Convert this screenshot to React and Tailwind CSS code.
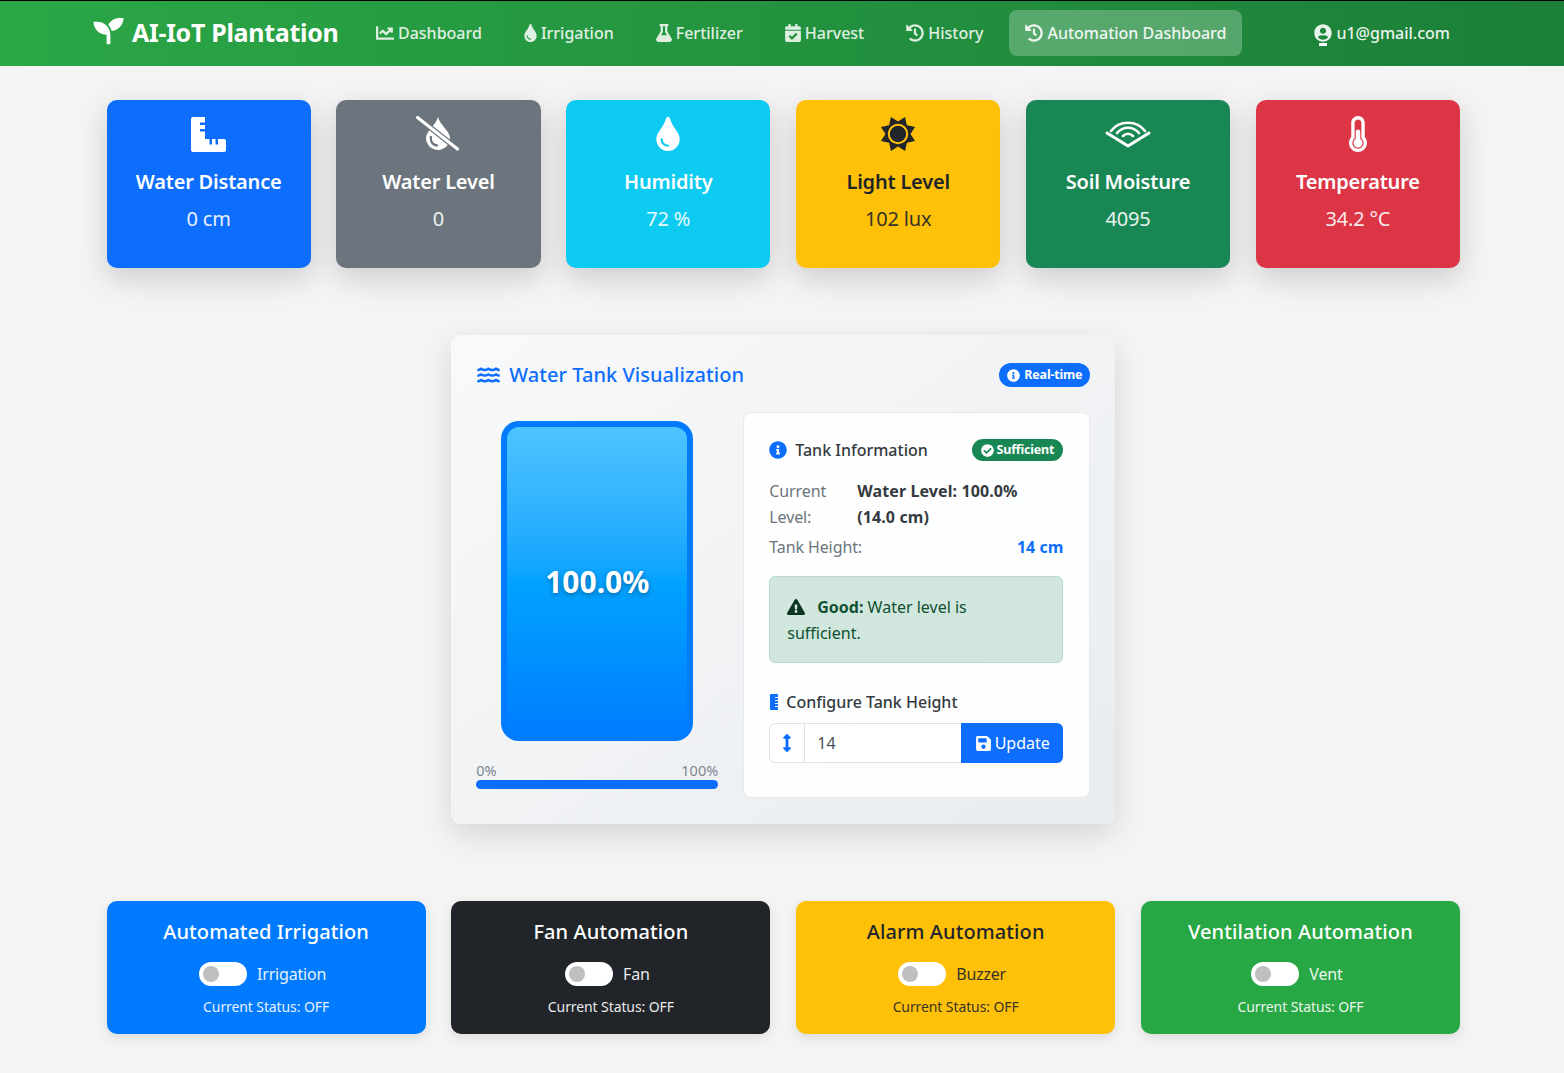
import React from 'react';
import {
  FaSeedling, FaChartLine, FaTint, FaFlask, FaCalendarCheck, FaHistory, FaUserCircle,
  FaThermometerHalf, FaWater, FaInfoCircle,
  FaCheckCircle, FaExclamationTriangle, FaRulerVertical, FaArrowsAltV, FaSave,
} from 'react-icons/fa';

const NAV = [
  { label: 'Dashboard', Icon: FaChartLine, w: 'w-[18px]' },
  { label: 'Irrigation', Icon: FaTint, w: 'w-[13px]' },
  { label: 'Fertilizer', Icon: FaFlask, w: 'w-[16px]' },
  { label: 'Harvest', Icon: FaCalendarCheck, w: 'w-[16px]' },
  { label: 'History', Icon: FaHistory, w: 'w-[18px]' },
  { label: 'Automation Dashboard', Icon: FaHistory, w: 'w-[18px]', active: true },
];

function RulerIcon({ className }) {
  return (
    <svg viewBox="0 0 35 35" className={className} fill="currentColor">
      <path d="M2 0 H14 V5.5 H9 V8 H14 V12 H9 V14.5 H14 V22 H18.5 V27.5 H21 V22 H24.5 V27.5 H27 V22 H33 a2 2 0 0 1 2 2 V33 a2 2 0 0 1 -2 2 H2 a2 2 0 0 1 -2 -2 V2 a2 2 0 0 1 2 -2 Z" />
    </svg>
  );
}

function DropSlashIcon({ className }) {
  return (
    <svg viewBox="0 0 44 36" className={className} fill="none">
      <path d="M22 1 C24 9 34 15 34 22 C34 29 28 34 22 34 C16 34 10 29 10 22 C10 15 20 9 22 1 Z" fill="currentColor" />
      <path d="M15 20 C14 26 17 29.5 22 29.5" stroke="#6c757d" strokeWidth="2.2" />
      <path d="M1.5 1.5 L41.5 33" stroke="#6c757d" strokeWidth="5.5" />
      <path d="M1.5 1.5 L41.5 33" stroke="currentColor" strokeWidth="3" strokeLinecap="round" />
    </svg>
  );
}

// eight blunt spikes, turned so that none points straight up
const SUN_POINTS = Array.from({ length: 16 }, (_, i) => {
  const r = i % 2 === 0 ? 18.5 : 12.5;
  const a = ((22.5 * i - 67.5) * Math.PI) / 180;
  return `${(18 + r * Math.cos(a)).toFixed(2)},${(18 + r * Math.sin(a)).toFixed(2)}`;
}).join(' ');

function SunIcon({ className }) {
  return (
    <svg viewBox="0 0 36 36" className={className}>
      <polygon points={SUN_POINTS} fill="currentColor" strokeLinejoin="round" />
      <circle cx="18" cy="18" r="9.2" fill="none" stroke="#ffc107" strokeWidth="2" />
    </svg>
  );
}

function SoilIcon({ className }) {
  return (
    <svg viewBox="0 0 46 28" className={className} fill="none" stroke="currentColor" strokeLinecap="round">
      <path d="M2 13 L23 26 L44 13" strokeWidth="3" strokeLinejoin="round" />
      <path d="M6 11 C14 0 32 0 40 11" strokeWidth="2.6" />
      <path d="M12 13 C18 6 28 6 34 13" strokeWidth="2.6" />
      <path d="M18 16 C21 13 25 13 28 16" strokeWidth="2.6" />
    </svg>
  );
}

const SENSORS = [
  { title: 'Water Distance', value: '0 cm', Icon: RulerIcon, bg: 'bg-[#0d6efd]', text: 'text-white', icon: 'w-[35px] h-[35px]' },
  { title: 'Water Level', value: '0', Icon: DropSlashIcon, bg: 'bg-[#6c757d]', text: 'text-white', icon: 'w-[44px] h-[36px]' },
  { title: 'Humidity', value: '72 %', Icon: FaTint, bg: 'bg-[#0dcaf0]', text: 'text-white', icon: 'w-[36px] h-[34px]' },
  { title: 'Light Level', value: '102 lux', Icon: SunIcon, bg: 'bg-[#ffc107]', text: 'text-[#212529]', icon: 'w-[36px] h-[36px]' },
  { title: 'Soil Moisture', value: '4095', Icon: SoilIcon, bg: 'bg-[#198754]', text: 'text-white', icon: 'w-[46px] h-[28px]' },
  { title: 'Temperature', value: '34.2 °C', Icon: FaThermometerHalf, bg: 'bg-[#dc3545]', text: 'text-white', icon: 'w-[36px] h-[36px]' },
];

const AUTOMATIONS = [
  { title: 'Automated Irrigation', label: 'Irrigation', bg: 'bg-[#007bff]', text: 'text-white' },
  { title: 'Fan Automation', label: 'Fan', bg: 'bg-[#212529]', text: 'text-white' },
  { title: 'Alarm Automation', label: 'Buzzer', bg: 'bg-[#ffc107]', text: 'text-[#212529]' },
  { title: 'Ventilation Automation', label: 'Vent', bg: 'bg-[#28a745]', text: 'text-white' },
];

function Navbar() {
  return (
    <nav className="h-[66px] border-t border-black bg-gradient-to-r from-[#2ba746] to-[#1b7f38] text-white flex items-center pl-[92px] pb-[2px]">
      <FaSeedling className="w-[33px] h-[30px] -mt-[4px]" />
      <span className="ml-[7px] text-[25px] font-bold leading-none tracking-[-0.3px] w-[228px]">AI-IoT Plantation</span>
      <div className="flex items-center gap-[10px]">
        {NAV.map(({ label, Icon, w, active }) => (
          <a
            key={label}
            className={`h-[46px] px-4 flex items-center gap-[4px] rounded-lg text-[16px] font-medium ${
              active ? 'bg-white/25 text-white/90' : 'text-white/85'
            }`}
          >
            <Icon className={`${w} h-[18px] shrink-0`} />
            {label}
          </a>
        ))}
      </div>
      <div className="relative ml-[72px] flex items-center gap-[4px] text-[16px] font-medium text-white/90">
        <FaUserCircle className="w-[18px] h-[18px]" />
        u1@gmail.com
        <span className="absolute left-[5px] top-[22px] w-[8px] h-[3px] bg-white" />
      </div>
    </nav>
  );
}

function SensorCard({ title, value, Icon, bg, text, icon }) {
  return (
    <div className={`h-[168px] rounded-[10px] ${bg} ${text} shadow-[0_10px_30px_rgba(0,0,0,0.17)] flex flex-col items-center`}>
      <div className="h-[36px] mt-[16px] flex items-center justify-center">
        <Icon className={icon} />
      </div>
      <div className="mt-[12px] text-[20px] font-semibold leading-[36px] tracking-[-0.2px]">{title}</div>
      <div className="mt-[1px] text-[20px] leading-[36px] tracking-[-0.2px] opacity-90">{value}</div>
    </div>
  );
}

function TankPanel() {
  return (
    <section className="w-[664px] h-[489px] mx-auto rounded-[10px] bg-gradient-to-br from-[#f8f9fa] to-[#e9ecef] shadow-[0_10px_30px_rgba(0,0,0,0.13)] px-[25px] pt-[27px]">
      <div className="flex items-center justify-between h-[26px]">
        <h2 className="flex items-center gap-[8px] text-[#0d6efd] text-[20px] font-medium tracking-[0.05px] leading-none">
          <FaWater className="w-[25px] h-[20px]" />
          Water Tank Visualization
        </h2>
        <span className="flex items-center gap-[4px] h-[24px] px-[8px] rounded-full bg-[#0d6efd] text-white text-[12.5px] font-bold tracking-[-0.2px]">
          <FaInfoCircle className="w-[13px] h-[13px]" />
          Real-time
        </span>
      </div>

      <div className="flex gap-[25px] mt-[24px]">
        <div className="w-[242px] pt-[9px]">
          <div className="w-[192px] h-[320px] mx-auto pb-[6px] rounded-[18px] border-[6px] border-[#007bff] border-b-0 bg-gradient-to-b from-[#4dc4ff] via-[#00a2ff] to-[#007bff] flex items-center justify-center">
            <span className="text-white text-[30px] font-bold [text-shadow:0_2px_5px_rgba(0,0,0,0.35)]">100.0%</span>
          </div>
          <div className="mt-[20px] flex justify-between text-[14.5px] leading-[18px] text-[#7c858c]">
            <span>0%</span>
            <span>100%</span>
          </div>
          <div className="mt-[1px] h-[9px] rounded-full bg-[#0d6efd]" />
        </div>

        <div className="w-[347px] h-[386px] rounded-[8px] bg-white/90 border border-[#e7e9ec] pl-[25px] pr-[26px] pt-[25px]">
          <div className="flex items-center justify-between h-[24px]">
            <h3 className="flex items-center gap-[8px] text-[#343a40] text-[16px] font-medium leading-none">
              <FaInfoCircle className="w-[18px] h-[18px] text-[#0d6efd]" />
              Tank Information
            </h3>
            <span className="flex items-center gap-[3px] h-[22px] px-[9px] rounded-full bg-[#198754] text-white text-[12.5px] font-bold tracking-[-0.2px]">
              <FaCheckCircle className="w-[13px] h-[13px]" />
              Sufficient
            </span>
          </div>

          <div className="mt-[16px] flex text-[16px] leading-[26px]">
            <span className="w-[88px] text-[#6c757d] tracking-[-0.1px]">Current Level:</span>
            <span className="w-[190px] font-bold text-[#343a40] tracking-[0.1px]">Water Level: 100.0% (14.0 cm)</span>
          </div>
          <div className="mt-[4px] flex justify-between text-[16px] leading-[26px]">
            <span className="text-[#6c757d] tracking-[-0.1px]">Tank Height:</span>
            <span className="font-bold text-[#0d6efd]">14 cm</span>
          </div>

          <div className="mt-[16px] h-[87px] rounded-[6px] bg-[#d1e7dd] border border-[#badbcc] pl-[17px] pr-[80px] pt-[18px] text-[16px] leading-[25.5px] text-[#0f5132]">
            <FaExclamationTriangle className="inline w-[18px] h-[16px] mr-[12px] text-[#0a3622] -mt-[3px]" />
            <b>Good:</b> Water level is sufficient.
          </div>

          <div className="mt-[27px] flex items-center gap-[7px] text-[#343a40] text-[16px] font-medium leading-[24px]">
            <FaRulerVertical className="w-[10px] h-[16px] text-[#0d6efd]" />
            Configure Tank Height
          </div>

          <div className="mt-[9px] flex h-[40px]">
            <div className="w-[36px] rounded-l-[6px] bg-white border border-[#dee2e6] flex items-center justify-center">
              <FaArrowsAltV className="w-[14px] h-[18px] text-[#0d6efd]" />
            </div>
            <div className="flex-1 bg-white border-y border-[#dee2e6] flex items-center pl-[12px] text-[16px] text-[#495057]">14</div>
            <button className="w-[102px] rounded-r-[6px] bg-[#0d6efd] text-white text-[16px] flex items-center justify-center gap-[3px]">
              <FaSave className="w-[17px] h-[17px]" />
              Update
            </button>
          </div>
        </div>
      </div>
    </section>
  );
}

function AutomationCard({ title, label, bg, text }) {
  return (
    <div className={`h-[133px] rounded-[10px] ${bg} ${text} shadow-[0_4px_12px_rgba(0,0,0,0.1)] flex flex-col items-center pt-[16px]`}>
      <h4 className="text-[20px] font-medium leading-[30px] tracking-[0.1px]">{title}</h4>
      <div className="mt-[15px] pr-[7px] flex items-center gap-[10px] h-[24px]">
        <span className="w-[48px] h-[24px] rounded-full bg-white flex items-center pl-[4px]">
          <span className="w-[16px] h-[16px] rounded-full bg-[#bfbfbf]" />
        </span>
        <span className="text-[16px] tracking-[-0.2px] opacity-90">{label}</span>
      </div>
      <div className="mt-[11px] text-[14px] leading-[20px] tracking-[-0.1px] opacity-90">Current Status: OFF</div>
    </div>
  );
}

export default function App() {
  return (
    <div className="min-h-[1073px] bg-[#f4f4f4] font-['Noto_Sans',sans-serif] overflow-hidden">
      <Navbar />
      <main className="pl-[106.5px] pr-[104px] pt-[34px]">
        <div className="grid grid-cols-6 gap-x-[25.6px]">
          {SENSORS.map((s) => <SensorCard key={s.title} {...s} />)}
        </div>
        <div className="mt-[67px]">
          <TankPanel />
        </div>
        <div className="mt-[77px] grid grid-cols-4 gap-x-[25.6px]">
          {AUTOMATIONS.map((a) => <AutomationCard key={a.title} {...a} />)}
        </div>
      </main>
    </div>
  );
}
